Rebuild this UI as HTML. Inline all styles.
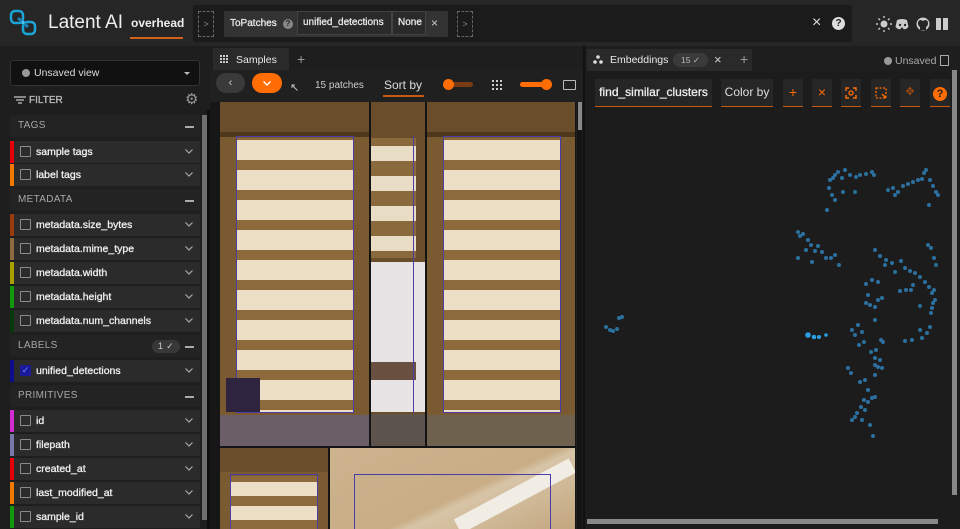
<!DOCTYPE html>
<html><head><meta charset="utf-8">
<style>
*{box-sizing:border-box;margin:0;padding:0}
body{width:960px;height:529px;overflow:hidden;background:#1e1e1e;font-family:"Liberation Sans",sans-serif;color:#ddd;position:relative}
.a{position:absolute}
.hdr{left:0;top:0;width:960px;height:46px;background:#262626}
.row{position:absolute;left:10px;width:190px;height:22px;background:#2b2b2b;font-size:10.5px;color:#f0f0f0;line-height:22px}
.row .bar{position:absolute;left:0;top:0;width:4px;height:22px}
.row .cb{position:absolute;left:10px;top:5px;width:11px;height:11px;border:1.5px solid #8a8a8a;border-radius:1px}
.row .t{position:absolute;left:26px;-webkit-text-stroke:0.3px #f0f0f0}
.row .ch,.ch2{position:absolute;right:7px;top:8px;width:8px;height:5px}
.sec{position:absolute;left:10px;width:190px;height:22px;background:#232323;font-size:10px;color:#a8a8a8;line-height:22px;padding-left:8px;letter-spacing:.3px}
.sec .m{position:absolute;right:6px;top:11px;width:9px;height:1.5px;background:#aaa}
.tb{position:absolute;top:79px;height:28px;background:#262626;border-bottom:1.5px solid #c55a10;color:#ff6d04;font-size:14px;text-align:center;line-height:27px}
</style></head><body>
<svg width="0" height="0" style="position:absolute"><defs><symbol id="chev" viewBox="0 0 8 5"><path d="M0.5 0.5L4 4L7.5 0.5" fill="none" stroke="#aaa" stroke-width="1.2"/></symbol></defs></svg>
<div class="a hdr"></div>
<svg class="a" style="left:9px;top:9px" width="30" height="28" viewBox="0 0 30 28"><rect x="2" y="2" width="12" height="12" rx="4" fill="none" stroke="#1aa5d8" stroke-width="2.5"/><rect x="14" y="13" width="12" height="12" rx="4" fill="none" stroke="#1aa5d8" stroke-width="2.5"/><path d="M9 9 L19 18" stroke="#1a7fb0" stroke-width="3"/><circle cx="14" cy="13.5" r="1.6" fill="#4ec7f0"/></svg>
<div class="a" style="left:48px;top:12px;font-size:19px;color:#eee">Latent AI</div>
<div class="a" style="left:131px;top:16px;font-size:12px;font-weight:bold;color:#eee">overhead</div>
<div class="a" style="left:130px;top:37px;width:53px;height:1.5px;background:#d2611b"></div>
<div class="a" style="left:193px;top:5px;width:659px;height:37px;background:#1b1b1b;border-radius:2px"></div>
<div class="a" style="left:198px;top:11px;width:16px;height:26px;border:1px dashed #666;color:#888;font-size:9px;text-align:center;line-height:24px">&gt;</div>
<div class="a" style="left:224px;top:11px;width:224px;height:26px;background:#333;border-radius:2px"></div>
<div class="a" style="left:230px;top:18px;font-size:10px;color:#e8e8e8;-webkit-text-stroke:0.3px #e8e8e8">ToPatches</div>
<div class="a" style="left:283px;top:19px;width:10px;height:10px;border-radius:50%;background:#888;color:#222;font-size:8px;text-align:center;line-height:10px;font-weight:bold">?</div>
<div class="a" style="left:297px;top:11px;width:95px;height:24px;background:#2a2a2a;border:1px solid #444;font-size:10px;color:#e8e8e8;padding:5px 0 0 5px;-webkit-text-stroke:0.3px #e8e8e8;white-space:nowrap;overflow:hidden">unified_detections</div>
<div class="a" style="left:392px;top:11px;width:34px;height:24px;background:#2a2a2a;border:1px solid #444;font-size:10px;color:#e8e8e8;padding:5px 0 0 5px;-webkit-text-stroke:0.3px #e8e8e8">None</div>
<div class="a" style="left:431px;top:16px;font-size:12px;color:#ccc">×</div>
<div class="a" style="left:457px;top:11px;width:16px;height:26px;border:1px dashed #666;color:#888;font-size:9px;text-align:center;line-height:24px">&gt;</div>
<div class="a" style="left:812px;top:14px;font-size:16px;color:#ddd">×</div>
<div class="a" style="left:832px;top:17px;width:13px;height:13px;border-radius:50%;background:#ddd;color:#1b1b1b;font-size:10px;text-align:center;line-height:13px;font-weight:bold">?</div>
<svg class="a" style="left:876px;top:16px" width="80" height="16" viewBox="0 0 80 16"><circle cx="8" cy="8" r="3.5" fill="#ccc"/><g stroke="#ccc" stroke-width="1.4"><path d="M8 0v2M8 14v2M0 8h2M14 8h2M2.5 2.5l1.5 1.5M12 12l1.5 1.5M2.5 13.5L4 12M12 4l1.5-1.5"/></g><path d="M21 4q5-2 10 0l1.5 7q-3 3-5 2l-1-1.5h-1l-1 1.5q-2 1-5-2z" fill="#ccc"/><circle cx="24" cy="9" r="1.2" fill="#262626"/><circle cx="29" cy="9" r="1.2" fill="#262626"/><circle cx="47" cy="8" r="6.5" fill="#ccc"/><path d="M44 14v-3q-2-1-2-4t3-3q2 1 2 1t2-1q3 0 3 3t-2 4v3z" fill="#262626"/><path d="M60 2h5v12h-5zM67 2h5v12h-5z" fill="#ccc"/></svg>

<div class="a" style="left:10px;top:60px;width:190px;height:26px;background:#111;border:1px solid #333;border-radius:3px"></div>
<div class="a" style="left:22px;top:69px;width:8px;height:8px;border-radius:50%;background:#999"></div>
<div class="a" style="left:34px;top:67px;font-size:10.5px;color:#ddd">Unsaved view</div>
<div class="a" style="left:184px;top:72px;width:0;height:0;border-left:3px solid transparent;border-right:3px solid transparent;border-top:3px solid #bbb"></div>
<svg class="a" style="left:14px;top:95px" width="12" height="10"><path d="M0 2h12M2 5h8M4 8h4" stroke="#aaa" stroke-width="1.4"/></svg>
<div class="a" style="left:29px;top:95px;font-size:10px;color:#bbb;-webkit-text-stroke:0.3px #bbb">FILTER</div>
<div class="a" style="left:185px;top:90px;font-size:15px;color:#999">⚙</div>
<div class="a" style="left:202px;top:115px;width:5px;height:405px;background:#6e6e6e"></div>
<div class="a" style="left:207px;top:110px;width:3px;height:419px;background:#0e0e0e"></div>

<div class="sec" style="top:115px">TAGS<span class="m"></span></div>
<div class="row" style="top:141px"><div class="bar" style="background:#e3000b"></div><div class="cb"></div><span class="t">sample tags</span><svg class="ch"><use href="#chev"/></svg></div>
<div class="row" style="top:164px"><div class="bar" style="background:#f07700"></div><div class="cb"></div><span class="t">label tags</span><svg class="ch"><use href="#chev"/></svg></div>
<div class="sec" style="top:189px">METADATA<span class="m"></span></div>
<div class="row" style="top:214px"><div class="bar" style="background:#9a3a0a"></div><div class="cb"></div><span class="t">metadata.size_bytes</span><svg class="ch"><use href="#chev"/></svg></div>
<div class="row" style="top:238px"><div class="bar" style="background:#8e6a43"></div><div class="cb"></div><span class="t">metadata.mime_type</span><svg class="ch"><use href="#chev"/></svg></div>
<div class="row" style="top:262px"><div class="bar" style="background:#a8a000"></div><div class="cb"></div><span class="t">metadata.width</span><svg class="ch"><use href="#chev"/></svg></div>
<div class="row" style="top:286px"><div class="bar" style="background:#139a0c"></div><div class="cb"></div><span class="t">metadata.height</span><svg class="ch"><use href="#chev"/></svg></div>
<div class="row" style="top:310px"><div class="bar" style="background:#073a0a"></div><div class="cb"></div><span class="t">metadata.num_channels</span><svg class="ch"><use href="#chev"/></svg></div>
<div class="sec" style="top:335px">LABELS<span class="m"></span><span class="a" style="right:20px;top:5px;width:28px;height:13px;border-radius:7px;background:#383838;font-size:9px;line-height:13px;text-align:center;color:#ccc">1 ✓</span></div>
<div class="row" style="top:360px"><div class="bar" style="background:#0e0e8c"></div><div class="cb" style="background:#1a1a9a;border-color:#1a1a9a;color:#6a8cff;font-size:9px;line-height:9px;text-align:center">✓</div><span class="t">unified_detections</span><svg class="ch"><use href="#chev"/></svg></div>
<div class="sec" style="top:385px">PRIMITIVES<span class="m"></span></div>
<div class="row" style="top:410px"><div class="bar" style="background:#d22bd2"></div><div class="cb"></div><span class="t">id</span><svg class="ch"><use href="#chev"/></svg></div>
<div class="row" style="top:434px"><div class="bar" style="background:#7a78a8"></div><div class="cb"></div><span class="t">filepath</span><svg class="ch"><use href="#chev"/></svg></div>
<div class="row" style="top:458px"><div class="bar" style="background:#e3000b"></div><div class="cb"></div><span class="t">created_at</span><svg class="ch"><use href="#chev"/></svg></div>
<div class="row" style="top:482px"><div class="bar" style="background:#f07700"></div><div class="cb"></div><span class="t">last_modified_at</span><svg class="ch"><use href="#chev"/></svg></div>
<div class="row" style="top:506px"><div class="bar" style="background:#139a0c"></div><div class="cb"></div><span class="t">sample_id</span><svg class="ch"><use href="#chev"/></svg></div>

<div class="a" style="left:213px;top:48px;width:76px;height:22px;background:#2a2a2a"></div>
<svg class="a" style="left:220px;top:55px" width="8" height="8"><g fill="#ccc"><rect x="0" y="0" width="2" height="2"/><rect x="3" y="0" width="2" height="2"/><rect x="6" y="0" width="2" height="2"/><rect x="0" y="3" width="2" height="2"/><rect x="3" y="3" width="2" height="2"/><rect x="6" y="3" width="2" height="2"/><rect x="0" y="6" width="2" height="2"/><rect x="3" y="6" width="2" height="2"/><rect x="6" y="6" width="2" height="2"/></g></svg>
<div class="a" style="left:236px;top:54px;font-size:10.5px;color:#e8e8e8">Samples</div>
<div class="a" style="left:297px;top:51px;font-size:14px;color:#999">+</div>
<div class="a" style="left:210px;top:70px;width:374px;height:32px;background:#202020"></div>
<div class="a" style="left:216px;top:73px;width:29px;height:20px;border-radius:10px;background:#3a3a3a;color:#ccc;font-size:11px;text-align:center;line-height:20px">‹</div>
<div class="a" style="left:252px;top:73px;width:30px;height:20px;border-radius:10px;background:#ff6d04"></div>
<svg class="a" style="left:263px;top:81px" width="8" height="5"><path d="M0.5 0.5L4 4L7.5 0.5" fill="none" stroke="#fff" stroke-width="1.4"/></svg>
<div class="a" style="left:290px;top:81px;font-size:11px;color:#ccc">↖</div>
<div class="a" style="left:315px;top:80px;font-size:10px;color:#ccc">15 patches</div>
<div class="a" style="left:384px;top:78px;font-size:12px;color:#ddd">Sort by</div>
<div class="a" style="left:383px;top:95px;width:41px;height:1.5px;background:#c55a10"></div>
<div class="a" style="left:443px;top:82px;width:30px;height:5px;border-radius:3px;background:#7a3b12"></div>
<div class="a" style="left:443px;top:79px;width:11px;height:11px;border-radius:50%;background:#ff6d04"></div>
<svg class="a" style="left:492px;top:80px" width="10" height="10"><g fill="#ccc"><rect x="0" y="0" width="2" height="2"/><rect x="4" y="0" width="2" height="2"/><rect x="8" y="0" width="2" height="2"/><rect x="0" y="4" width="2" height="2"/><rect x="4" y="4" width="2" height="2"/><rect x="8" y="4" width="2" height="2"/><rect x="0" y="8" width="2" height="2"/><rect x="4" y="8" width="2" height="2"/><rect x="8" y="8" width="2" height="2"/></g></svg>
<div class="a" style="left:520px;top:82px;width:30px;height:5px;border-radius:3px;background:#ff6d04"></div>
<div class="a" style="left:541px;top:79px;width:11px;height:11px;border-radius:50%;background:#ff6d04"></div>
<div class="a" style="left:563px;top:80px;width:13px;height:10px;border:1px solid #bbb;border-radius:1px"></div>
<div class="a" style="left:210px;top:102px;width:10px;height:427px;background:#161616"></div>
<div class="a" style="left:220px;top:102px;width:356px;height:427px;background:#141414"></div>
<div class="a" style="left:577px;top:102px;width:5px;height:427px;background:#141414"></div>
<div class="a" style="left:578px;top:102px;width:4px;height:28px;background:#888"></div>

<div class="a" style="left:220px;top:102px;width:149px;height:344px;background:#7a5a30;overflow:hidden">
 <div class="a" style="left:0;top:0;width:149px;height:30px;background:#6a4e2c"></div>
 <div class="a" style="left:0;top:30px;width:149px;height:5px;background:#4e381c"></div>
 <div class="a" style="left:16px;top:36px;width:118px;height:275px;background:repeating-linear-gradient(180deg,#8c6a3c 0 2px,#ecdfc6 2px 22px,#8c6a3c 22px 30px)"></div>
 <div class="a" style="left:16px;top:34px;width:118px;height:277px;border:1px solid #4a3daa"></div>
 <div class="a" style="left:6px;top:276px;width:34px;height:34px;background:#2e2440"></div>
 <div class="a" style="left:0;top:313px;width:149px;height:31px;background:#6b5e66"></div>
</div>
<div class="a" style="left:371px;top:102px;width:54px;height:344px;background:#6a4e2c;overflow:hidden">
 <div class="a" style="left:0;top:36px;width:45px;height:120px;background:repeating-linear-gradient(180deg,#8a6a3c 0 8px,#e8dcc4 8px 23px,#8a6a3c 23px 30px)"></div>
 <div class="a" style="left:0;top:160px;width:54px;height:150px;background:#e8e4e6"></div>
 <div class="a" style="left:0;top:260px;width:45px;height:18px;background:#6a5040"></div>
 <div class="a" style="left:0;top:312px;width:54px;height:32px;background:#5e544e"></div>
 <div class="a" style="left:42px;top:34px;width:1px;height:277px;background:#4a3daa"></div>
</div>
<div class="a" style="left:427px;top:102px;width:148px;height:344px;background:#7a5a30;overflow:hidden">
 <div class="a" style="left:0;top:0;width:148px;height:30px;background:#6a4e2c"></div>
 <div class="a" style="left:0;top:30px;width:148px;height:5px;background:#4e381c"></div>
 <div class="a" style="left:16px;top:36px;width:118px;height:275px;background:repeating-linear-gradient(180deg,#8c6a3c 0 2px,#ecdfc6 2px 22px,#8c6a3c 22px 30px)"></div>
 <div class="a" style="left:16px;top:34px;width:118px;height:277px;border:1px solid #4a3daa"></div>
 <div class="a" style="left:0;top:313px;width:148px;height:31px;background:#6e624e"></div>
</div>
<div class="a" style="left:220px;top:448px;width:108px;height:81px;background:#7a5a30;overflow:hidden">
 <div class="a" style="left:0;top:0;width:108px;height:24px;background:#6a4e2c"></div>
 <div class="a" style="left:10px;top:28px;width:88px;height:60px;background:repeating-linear-gradient(180deg,#8c6a3c 0 6px,#ecdfc6 6px 20px,#8c6a3c 20px 24px)"></div>
 <div class="a" style="left:10px;top:26px;width:88px;height:60px;border:1px solid #4a3daa"></div>
</div>
<div class="a" style="left:330px;top:448px;width:245px;height:81px;background:linear-gradient(155deg,#cdb48e 0%,#c8ad86 55%,#d7c4a6 60%,#c2a67e 100%);overflow:hidden">
 <div class="a" style="left:120px;top:40px;width:130px;height:16px;background:#f1ece4;transform:rotate(-28deg)"></div>
 <div class="a" style="left:24px;top:26px;width:197px;height:60px;border:1px solid #4a3daa"></div>
</div>

<div class="a" style="left:583px;top:46px;width:2px;height:483px;background:#111"></div>
<div class="a" style="left:587px;top:49px;width:165px;height:22px;background:#2a2a2a"></div>
<svg class="a" style="left:593px;top:55px" width="10" height="9"><circle cx="5" cy="2" r="1.8" fill="#ddd"/><circle cx="2" cy="7" r="1.8" fill="#ddd"/><circle cx="8" cy="7" r="1.8" fill="#ddd"/></svg>
<div class="a" style="left:610px;top:54px;font-size:10.5px;color:#e8e8e8">Embeddings</div>
<div class="a" style="left:673px;top:53px;width:35px;height:14px;border-radius:7px;background:#3a3a3a;font-size:8.5px;color:#bbb;text-align:center;line-height:14px">15 ✓</div>
<div class="a" style="left:714px;top:52px;font-size:13px;color:#ccc">×</div>
<div class="a" style="left:740px;top:51px;font-size:14px;color:#999">+</div>
<div class="a" style="left:884px;top:57px;width:8px;height:8px;border-radius:50%;background:#999"></div>
<div class="a" style="left:895px;top:55px;font-size:10.5px;color:#aaa">Unsaved</div>
<div class="a" style="left:940px;top:55px;width:9px;height:11px;border:1px solid #aaa"></div>
<div class="a" style="left:585px;top:71px;width:375px;height:458px;background:#1c1c1c"></div>
<div class="tb" style="left:595px;width:117px;font-size:12px;color:#eee;-webkit-text-stroke:0.3px #eee;white-space:nowrap">find_similar_clusters</div>
<div class="tb" style="left:721px;width:52px;font-size:12px;color:#ddd">Color by</div>
<div class="tb" style="left:783px;width:20px">+</div>
<div class="tb" style="left:812px;width:20px">×</div>
<div class="tb" style="left:841px;width:20px"><svg width="12" height="12" style="margin-top:8px"><path d="M1 4V1h3M8 1h3v3M11 8v3H8M4 11H1V8" fill="none" stroke="#ff6d04" stroke-width="1.4"/><circle cx="6" cy="6" r="2" fill="none" stroke="#ff6d04" stroke-width="1.3"/></svg></div>
<div class="tb" style="left:871px;width:20px"><svg width="12" height="12" style="margin-top:8px"><rect x="1" y="1" width="10" height="10" fill="none" stroke="#ff6d04" stroke-width="1.3" stroke-dasharray="2 1.5"/><path d="M7 7l4 4" stroke="#ff6d04" stroke-width="1.4"/></svg></div>
<div class="tb" style="left:900px;width:20px;font-size:11px;color:#a04a10">✥</div>
<div class="tb" style="left:930px;width:20px"><span style="display:inline-block;width:14px;height:14px;border-radius:50%;background:#ff6d04;color:#1c1c1c;font-size:11px;line-height:14px;font-weight:bold">?</span></div>
<div class="a" style="left:952px;top:70px;width:5px;height:425px;background:#888"></div>
<div class="a" style="left:587px;top:519px;width:351px;height:5px;background:#888"></div>
<svg class="a" style="left:585px;top:110px" width="365" height="405" viewBox="585 110 365 405">
<g fill="#2f7fb8" opacity="0.85">
<circle cx="830" cy="180" r="2"/><circle cx="833" cy="178" r="2"/><circle cx="835" cy="175" r="2"/><circle cx="838" cy="172" r="2"/><circle cx="842" cy="178" r="2"/><circle cx="845" cy="170" r="2"/><circle cx="850" cy="175" r="2"/><circle cx="856" cy="177" r="2"/><circle cx="860" cy="175" r="2"/><circle cx="866" cy="174" r="2"/><circle cx="872" cy="172" r="2"/><circle cx="874" cy="175" r="2"/><circle cx="829" cy="188" r="2"/><circle cx="832" cy="195" r="2"/><circle cx="835" cy="200" r="2"/><circle cx="827" cy="210" r="2"/><circle cx="843" cy="192" r="2"/><circle cx="855" cy="192" r="2"/>
<circle cx="888" cy="190" r="2"/><circle cx="893" cy="188" r="2"/><circle cx="898" cy="192" r="2"/><circle cx="903" cy="186" r="2"/><circle cx="908" cy="184" r="2"/><circle cx="913" cy="182" r="2"/><circle cx="918" cy="180" r="2"/><circle cx="922" cy="179" r="2"/><circle cx="924" cy="173" r="2"/><circle cx="926" cy="170" r="2"/><circle cx="930" cy="180" r="2"/><circle cx="933" cy="186" r="2"/><circle cx="936" cy="192" r="2"/><circle cx="938" cy="195" r="2"/><circle cx="929" cy="205" r="2"/><circle cx="895" cy="195" r="2"/>
<circle cx="798" cy="232" r="2"/><circle cx="800" cy="236" r="2"/><circle cx="803" cy="234" r="2"/><circle cx="808" cy="240" r="2"/><circle cx="811" cy="245" r="2"/><circle cx="815" cy="251" r="2"/><circle cx="818" cy="246" r="2"/><circle cx="822" cy="252" r="2"/><circle cx="826" cy="258" r="2"/><circle cx="831" cy="258" r="2"/><circle cx="835" cy="255" r="2"/><circle cx="839" cy="265" r="2"/><circle cx="798" cy="258" r="2"/><circle cx="806" cy="250" r="2"/><circle cx="812" cy="262" r="2"/>
<circle cx="875" cy="250" r="2"/><circle cx="880" cy="256" r="2"/><circle cx="886" cy="260" r="2"/><circle cx="892" cy="263" r="2"/><circle cx="901" cy="261" r="2"/><circle cx="905" cy="268" r="2"/><circle cx="910" cy="271" r="2"/><circle cx="915" cy="273" r="2"/><circle cx="920" cy="277" r="2"/><circle cx="925" cy="282" r="2"/><circle cx="929" cy="287" r="2"/><circle cx="932" cy="293" r="2"/><circle cx="935" cy="300" r="2"/><circle cx="934" cy="290" r="2"/><circle cx="936" cy="265" r="2"/><circle cx="934" cy="258" r="2"/><circle cx="931" cy="248" r="2"/><circle cx="928" cy="245" r="2"/><circle cx="895" cy="272" r="2"/><circle cx="885" cy="265" r="2"/><circle cx="872" cy="280" r="2"/><circle cx="878" cy="282" r="2"/><circle cx="866" cy="284" r="2"/><circle cx="868" cy="295" r="2"/><circle cx="900" cy="291" r="2"/><circle cx="906" cy="290" r="2"/><circle cx="911" cy="290" r="2"/><circle cx="913" cy="285" r="2"/>
<circle cx="866" cy="303" r="2"/><circle cx="870" cy="305" r="2"/><circle cx="875" cy="307" r="2"/><circle cx="878" cy="300" r="2"/><circle cx="882" cy="298" r="2"/><circle cx="875" cy="320" r="2"/><circle cx="920" cy="306" r="2"/><circle cx="932" cy="308" r="2"/><circle cx="933" cy="303" r="2"/><circle cx="931" cy="313" r="2"/><circle cx="930" cy="327" r="2"/><circle cx="927" cy="333" r="2"/><circle cx="922" cy="338" r="2"/><circle cx="920" cy="330" r="2"/><circle cx="912" cy="340" r="2"/><circle cx="905" cy="341" r="2"/><circle cx="858" cy="325" r="2"/><circle cx="852" cy="330" r="2"/><circle cx="855" cy="335" r="2"/><circle cx="859" cy="345" r="2"/><circle cx="864" cy="342" r="2"/><circle cx="862" cy="332" r="2"/><circle cx="871" cy="352" r="2"/><circle cx="876" cy="350" r="2"/><circle cx="881" cy="340" r="2"/><circle cx="875" cy="358" r="2"/><circle cx="875" cy="365" r="2"/><circle cx="878" cy="367" r="2"/><circle cx="882" cy="368" r="2"/><circle cx="875" cy="375" r="2"/><circle cx="880" cy="360" r="2"/><circle cx="883" cy="342" r="2"/><circle cx="848" cy="368" r="2"/><circle cx="851" cy="373" r="2"/><circle cx="860" cy="382" r="2"/><circle cx="865" cy="380" r="2"/><circle cx="864" cy="400" r="2"/><circle cx="861" cy="407" r="2"/><circle cx="865" cy="410" r="2"/><circle cx="868" cy="402" r="2"/><circle cx="872" cy="398" r="2"/><circle cx="875" cy="397" r="2"/><circle cx="868" cy="390" r="2"/><circle cx="862" cy="420" r="2"/><circle cx="857" cy="413" r="2"/><circle cx="852" cy="420" r="2"/><circle cx="855" cy="417" r="2"/><circle cx="870" cy="425" r="2"/><circle cx="873" cy="436" r="2"/>
<circle cx="606" cy="327" r="2"/><circle cx="610" cy="330" r="2"/><circle cx="613" cy="331" r="2"/><circle cx="617" cy="329" r="2"/><circle cx="619" cy="318" r="2"/><circle cx="622" cy="317" r="2"/>
</g>
<g fill="#2a9ee0"><circle cx="808" cy="335" r="2.8"/><circle cx="814" cy="337" r="2.3"/><circle cx="819" cy="337" r="2"/><circle cx="826" cy="335" r="1.8"/></g>
</svg>
</body></html>
